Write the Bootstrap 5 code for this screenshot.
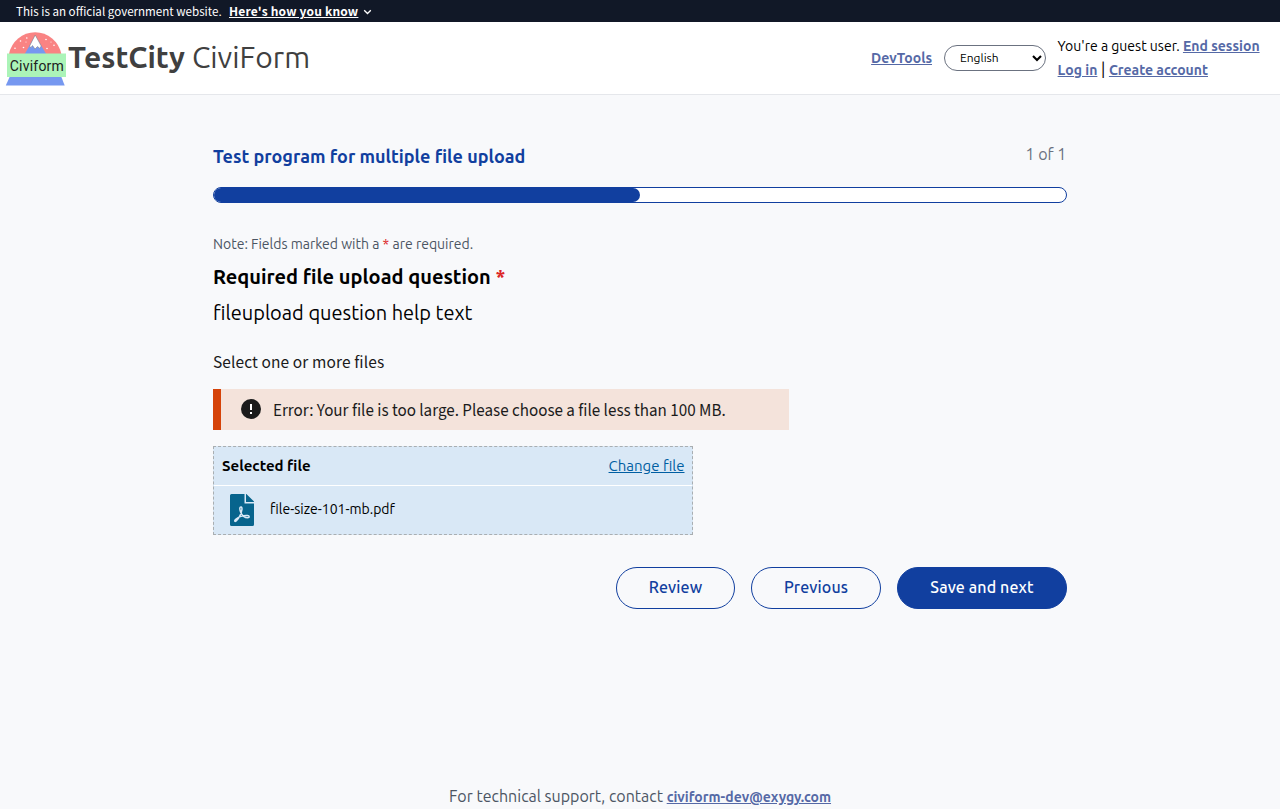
<!DOCTYPE html>
<html lang="en">
<head>
<meta charset="utf-8">
<meta name="viewport" content="width=device-width, initial-scale=1">
<title>TestCity CiviForm</title>
<link href="https://cdn.jsdelivr.net/npm/bootstrap@5.3.0/dist/css/bootstrap.min.css" rel="stylesheet">
<style>
  body { background: #f8f9fb; color: #000; font: 400 14px/24px Ubuntu, "Noto Sans", sans-serif; height: 809px; overflow: hidden; white-space: nowrap; }
  p, h1, h2 { margin: 0; }
  .source { font-family: "Noto Sans CJK SC", sans-serif; }
  .gov-banner { height: 22px; background: #111827; color: #fff; font-size: 11.6px; line-height: 22px; padding-left: 16px; }
  .gov-banner a { color: #fff; font-size: 12px; letter-spacing: .18px; margin-left: 7.4px; font-weight: 700; text-underline-offset: 1px; }
  .site-header { height: 73px; background: #fff; border-bottom: 1px solid #e5e7eb; padding: 0 19px 1px 4px; }
  .site-title { font-size: 30px; line-height: 36px; color: #404040; padding-bottom: 1px; }
  .site-title b { font-weight: 700; }
  .site-title span { font-weight: 400; margin-left: 7px; }
  .nav-text { color: #5569a6; font-weight: 700; }
  .user-links { width: 203.4px; }
  .divider { display: inline-block; width: 11.5px; text-align: center; font-size: 16px; line-height: 20px; }
  .lang { width: 102px; height: 26px; border: 1px solid #6b7280; border-radius: 13px; font-size: 12px; line-height: 24px; padding: 0 2px 0 15px; margin: 0 11.6px 0 12px; }
  .page-col { width: 854px; padding-top: 47px; }
  .program { color: #113f9f; font-size: 18px; line-height: 28px; font-weight: 700; }
  .count { color: #6b7280; font-size: 16px; margin-right: .6px; }
  .meter { height: 16px; border: 1px solid #113f9f; border-radius: 8px; background: #fff; margin-top: 17px; }
  .meter .progress-bar { background: #113f9f; border-radius: 8px; }
  .req { color: #dc2626; }
  .note { color: #4b5563; margin-top: 29px; }
  .question { font-size: 20px; line-height: 28px; font-weight: 700; margin-top: 7px; }
  .help { font-size: 20px; line-height: 28px; margin-top: 8px; }
  .hint { font-size: 15.5px; letter-spacing: .1px; color: #1b1b1b; margin-top: 22px; }
  .error-box { width: 576px; height: 41px; background: #f4e3db; border-left: 8px solid #d54309; color: #1b1b1b; font: 400 17px/24px "Source Sans 3", "Source Sans Pro", "Noto Sans CJK SC", sans-serif; margin-top: 16px; padding: 0 0 1px 20px; }
  .file-box { width: 480px; height: 89px; border: 1px dashed #a9aeb1; background: #d9e8f6; margin-top: 16px; }
  .file-head { height: 39px; border-bottom: 1px solid #fff; padding: 0 7.500px 0 8px; font-size: 15px; }
  .file-head a { color: #005ea2; }
  .file-row { height: 48px; padding-left: 16px; }
  .file-row span { margin: -2px 0 0 16px; }
  .pill { height: 42px; border: 1px solid #113f9f; border-radius: 21px; color: #113f9f; font-size: 16px; font-weight: 500; letter-spacing: .12px; line-height: 24px; padding: 7px 0 9px; }
  .pill-solid { background: #113f9f; color: #fff; }
  .w-review { width: 119px; } .w-prev { width: 130px; } .w-save { width: 170px; }
  .actions { margin-top: 32px; gap: 16px; }
  .support { margin-top: 175px; color: #4b5563; font-size: 16px; }
  .support a { font-size: 14px; }
</style>
<script src="https://cdn.jsdelivr.net/npm/bootstrap@5.3.0/dist/js/bootstrap.bundle.min.js"></script>
</head>
<body>
<aside class="gov-banner source d-flex align-items-center"><span>This is an official government website.</span><a href="#">Here's how you know</a>
  <svg width="11" height="8" viewBox="0 0 11 8" class="ms-1 mt-1"><path d="M2.200 1.200l3.300 3.300 3.300-3.300" fill="none" stroke="#fff" stroke-width="1.300"/></svg>
</aside>
<header class="site-header d-flex align-items-center justify-content-between">
  <div class="d-flex align-items-center">
    <svg width="64" height="60" viewBox="4 28 64 60">
      <path d="M9 54a26.600 26.600 0 0 1 52.300 0z" fill="#f98383"/>
      <path d="M35.200 35.500L46.500 54.500H24.500z" fill="#7698f0"/>
      <path d="M35.200 35l6 11-1.400 2.400-2.300-1.900-2.500 2.600-2.500-3.600-1.500 1.900-1.600-1z" fill="#fff" stroke="#777" stroke-width=".5"/>
      <g fill="#fff"><circle cx="20.500" cy="41" r=".8"/><circle cx="26.800" cy="38" r=".8"/><circle cx="15" cy="48.200" r=".8"/><circle cx="23.500" cy="47.500" r=".8"/><circle cx="26" cy="42" r=".5"/><circle cx="46" cy="39.500" r=".8"/><circle cx="54" cy="45.200" r=".8"/><circle cx="47" cy="48.500" r=".8"/><circle cx="51" cy="42" r=".5"/></g>
      <path d="M10 76h51l3.700 9.600H5.800z" fill="#7698f0"/>
      <path d="M7 53.500h59V77H7z" fill="#abf4b8"/>
      <text x="9.800" y="71.300" font-family="Roboto, sans-serif" font-size="14" textLength="54" fill="#202020">Civiform</text>
    </svg>
    <h1 class="site-title"><b>TestCity</b><span>CiviForm</span></h1>
  </div>
  <nav class="d-flex align-items-center">
    <a href="#" class="nav-text">DevTools</a>
    <div class="lang d-flex align-items-center justify-content-between"><span>English</span>
      <svg width="12" height="8" viewBox="0 0 12 8"><path d="M2 2l4 4 4-4" fill="none" stroke="#000" stroke-width="2.100"/></svg></div>
    <div class="user-links"><div>You're a guest user. <a href="#" class="nav-text">End session</a></div>
    <div><a href="#" class="nav-text">Log in</a><span class="divider">|</span><a href="#" class="nav-text">Create account</a></div></div>
  </nav>
</header>
<main class="page-col mx-auto">
  <div class="d-flex justify-content-between"><h2 class="program">Test program for multiple file upload</h2><span class="count">1 of 1</span></div>
  <div class="meter d-flex"><div class="progress-bar" style="width:50%"></div></div>
  <p class="note">Note: Fields marked with a <span class="req">*</span> are required.</p>
  <h2 class="question">Required file upload question <span class="req">*</span></h2>
  <p class="help">fileupload question help text</p>
  <p class="hint source">Select one or more files</p>
  <div class="error-box d-flex align-items-center">
    <svg width="20" height="20" viewBox="0 0 20 20" class="me-2"><circle cx="10" cy="10" r="10" fill="#1b1b1b"/><path d="M9 5h2v6H9zM9 13h2v2H9z" fill="#fff"/></svg>
    <span class="ms-1 pt-1">Error: Your file is too large. Please choose a file less than 100 MB.</span>
  </div>
  <section class="file-box">
    <div class="file-head d-flex align-items-center justify-content-between"><b>Selected file</b><a href="#">Change file</a></div>
    <div class="file-row d-flex align-items-center">
      <svg width="24" height="32" viewBox="0 0 24 32"><path d="M1.500 0H14.500V9.500H24V30.500a1.500 1.500 0 0 1-1.500 1.500H1.500A1.500 1.500 0 0 1 0 30.500v-29A1.500 1.500 0 0 1 1.500 0zM16 0h.4L24 7.600V8h-8z" fill="#07648d"/><path d="M11.200 13c-1.700-.5-1.700 2.300-.5 5.200 1.500 3.600 4.300 5.600 7 5.600 2 0 2-2-.2-2.200-4-.4-9.500 1.200-12 3.800-1.500 1.600-.4 2.700.9 1.400 2.400-2.400 4.900-7.500 5.500-11.100.2-1.300 0-2.400-.7-2.700z" fill="none" stroke="#d9e8f6" stroke-width="1.500"/></svg>
      <span>file-size-101-mb.pdf</span>
    </div>
  </section>
  <div class="actions d-flex justify-content-end">
    <button class="btn pill w-review">Review</button><button class="btn pill w-prev">Previous</button><button class="btn pill pill-solid w-save">Save and next</button>
  </div>
</main>
<footer class="support text-center">For technical support, contact <a href="#" class="nav-text">civiform-dev@exygy.com</a></footer>
</body>
</html>
